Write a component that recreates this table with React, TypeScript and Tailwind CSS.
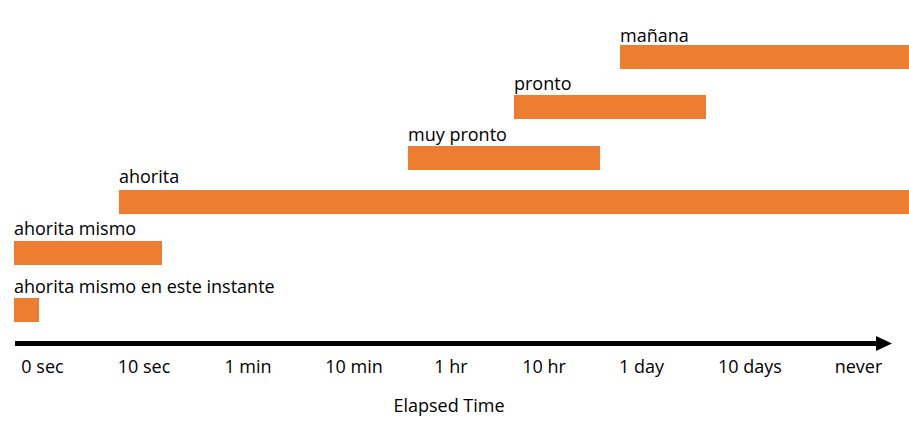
import React from "react";

type Row = { label: string; row: string; bar: string };

const rows: Row[] = [
  { label: "mañana", row: "ml-[620px] mt-0", bar: "w-[289px] mt-0" },
  { label: "pronto", row: "ml-[514px] mt-[4px]", bar: "w-[192px] mt-[2px]" },
  { label: "muy pronto", row: "ml-[408px] mt-[5px]", bar: "w-[192px] mt-[2px]" },
  { label: "ahorita", row: "ml-[119px] -mt-[4px]", bar: "w-[790px] mt-[4px]" },
  { label: "ahorita mismo", row: "ml-[14px] mt-[4px]", bar: "w-[148px] mt-[3px]" },
  { label: "ahorita mismo en este instante", row: "ml-[14px] mt-[11px]", bar: "w-[25px] mt-[2px]" },
];

const ticks: { t: string; w: string }[] = [
  { t: "0 sec", w: "w-[85px]" },
  { t: "10 sec", w: "w-[118px]" },
  { t: "1 min", w: "w-[90px]" },
  { t: "10 min", w: "w-[122px]" },
  { t: "1 hr", w: "w-[72px]" },
  { t: "10 hr", w: "w-[114px]" },
  { t: "1 day", w: "w-[81px]" },
  { t: "10 days", w: "w-[136px]" },
  { t: "never", w: "w-[81px]" },
];

export default function App() {
  return (
    <div className="w-[909px] h-[426px] overflow-hidden bg-white text-black font-['Open_Sans',sans-serif] text-[18px]">
      <div className="flex flex-col pt-[25px]">
        {rows.map((r) => (
          <div key={r.label} className={`flex flex-col items-start ${r.row}`}>
            <div className="leading-[20px] whitespace-nowrap">{r.label}</div>
            <div className={`h-[24px] bg-[#ED7D31] ${r.bar}`} />
          </div>
        ))}
        <svg className="mt-[12px] block" width="909" height="20" viewBox="0 0 909 20">
          <rect x="15" y="7" width="863" height="5" fill="#000" />
          <polygon points="876,2 892,9.5 876,17" fill="#000" />
        </svg>
        <div className="flex mt-[2px] leading-[20px]">
          {ticks.map((k) => (
            <div key={k.t} className={`text-center whitespace-nowrap ${k.w}`}>
              {k.t}
            </div>
          ))}
        </div>
        <div className="mt-[19px] leading-[20px] w-[898px] text-center">Elapsed Time</div>
      </div>
    </div>
  );
}
